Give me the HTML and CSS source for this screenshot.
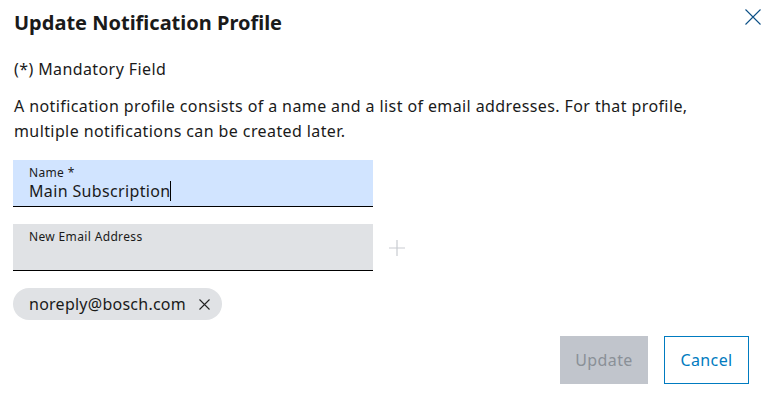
FILE: index.html
```html
<!DOCTYPE html>
<html lang="en">
<head>
<meta charset="utf-8">
<title>Update Notification Profile</title>
<link rel="stylesheet" href="styles.css">
</head>
<body>
<div class="dialog">
  <header class="dialog-header">
    <h1 class="dialog-title">Update Notification Profile</h1>
    <button class="close-btn" aria-label="Close">
      <svg width="16" height="16" viewBox="0 0 16 16"><path d="M0.5 0.5 L15.5 15.5 M15.5 0.5 L0.5 15.5" stroke="#0b4f86" stroke-width="1.1" fill="none"/></svg>
    </button>
  </header>
  <p class="mandatory">(*) Mandatory Field</p>
  <p class="description">A notification profile consists of a name and a list of email addresses. For that profile, multiple notifications can be created later.</p>
  <div class="field field-active">
    <span class="field-label">Name *</span>
    <span class="field-value">Main Subscription<span class="caret"></span></span>
  </div>
  <div class="email-row">
    <div class="field">
      <span class="field-label">New Email Address</span>
    </div>
    <button class="add-btn" aria-label="Add">
      <svg width="16" height="16" viewBox="0 0 16 16"><path d="M8 0 V16 M0 8 H16" stroke="#c9ccd1" stroke-width="1.2" fill="none"/></svg>
    </button>
  </div>
  <div class="chips">
    <span class="chip">noreply@bosch.com
      <svg class="chip-x" width="11" height="11" viewBox="0 0 11 11"><path d="M0.5 0.5 L10.5 10.5 M10.5 0.5 L0.5 10.5" stroke="#222" stroke-width="1.1" fill="none"/></svg>
    </span>
  </div>
  <footer class="actions">
    <button class="btn btn-disabled">Update</button>
    <button class="btn btn-secondary">Cancel</button>
  </footer>
</div>
</body>
</html>
```
FILE: styles.css
```css
html, body {
  margin: 0;
  padding: 0;
  background: #ffffff;
}
body {
  font-family: "Noto Sans", "Open Sans", sans-serif;
  color: #1a1a1a;
  letter-spacing: 0.4px;
}
.dialog {
  width: 765px;
  height: 394px;
  box-sizing: border-box;
  padding: 0 16px 0 13px;
  display: flex;
  flex-direction: column;
}
.dialog-header {
  display: flex;
  justify-content: space-between;
  align-items: flex-start;
}
.dialog-title {
  margin: 10px 0 0 1px;
  font-size: 20px;
  line-height: 26px;
  font-weight: 700;
  letter-spacing: 0;
}
.close-btn {
  background: none;
  border: 0;
  padding: 0;
  margin: 9px -12px 0 0;
  width: 16px;
  height: 16px;
  display: flex;
}
.mandatory {
  margin: 21px 0 0 1px;
  font-size: 16px;
  line-height: 24px;
}
.description {
  margin: 13px 0 0 1px;
  font-size: 16px;
  line-height: 25px;
}
.field {
  width: 360px;
  height: 46px;
  box-sizing: content-box;
  background: #e0e2e5;
  border-bottom: 1px solid #000;
  display: flex;
  flex-direction: column;
}
.field-active {
  margin-top: 16px;
  background: #d1e4ff;
}
.field-label {
  font-size: 12px;
  line-height: 14px;
  margin: 6px 0 0 16px;
  letter-spacing: 0.35px;
}
.field-value {
  font-size: 16px;
  line-height: 20px;
  margin: 1px 0 0 16px;
  display: flex;
  align-items: center;
  letter-spacing: 0.35px;
}
.caret {
  display: inline-block;
  width: 1px;
  height: 20px;
  background: #000;
  margin-left: -1px;
}
.email-row {
  display: flex;
  align-items: center;
  gap: 16px;
  margin-top: 17px;
}
.add-btn {
  background: none;
  border: 0;
  padding: 0;
  display: flex;
}
.chips {
  display: flex;
  margin-top: 17px;
}
.chip {
  display: inline-flex;
  align-items: center;
  gap: 13px;
  height: 32px;
  padding: 0 12px 0 16px;
  border-radius: 16px;
  background: #e0e2e5;
  font-size: 16px;
  letter-spacing: 0.25px;
}
.chip-x {
  margin-top: 1px;
}
.actions {
  display: flex;
  justify-content: flex-end;
  gap: 16px;
  margin-top: 16px;
}
.btn {
  height: 48px;
  font-family: inherit;
  font-size: 16px;
  letter-spacing: 0.4px;
  padding: 0;
  box-sizing: border-box;
}
.btn-disabled {
  width: 88px;
  background: #c1c5cc;
  color: #8a9097;
  border: 0;
}
.btn-secondary {
  width: 85px;
  background: #fff;
  color: #007bc0;
  border: 1px solid #007bc0;
}
```
